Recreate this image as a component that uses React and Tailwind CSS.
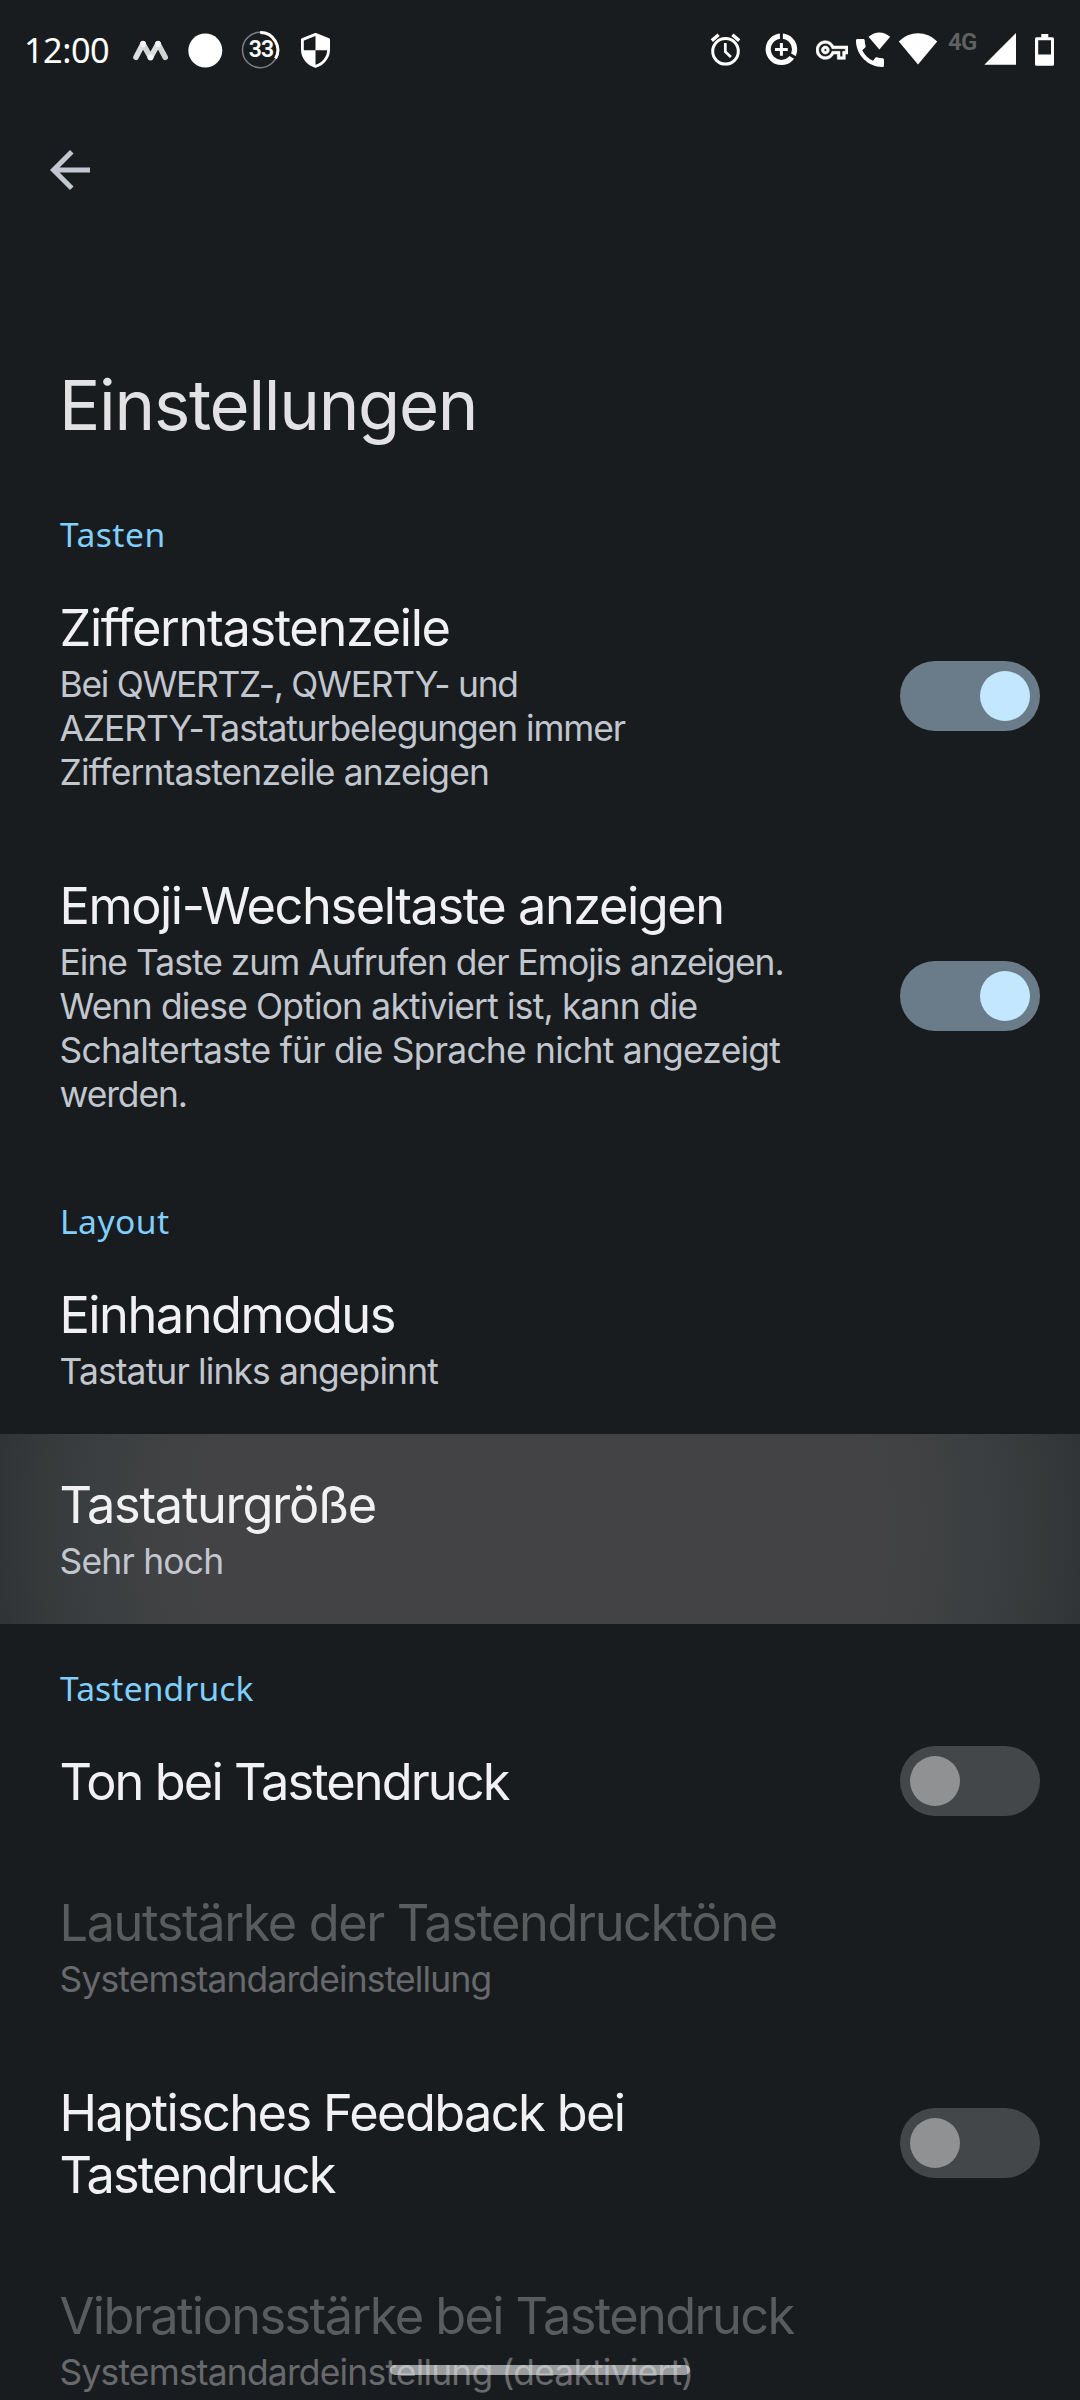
import React from "react";

const sections = [
  {
    label: "Tasten",
    labelTracking: "tracking-[0.49px]",
    items: [
      {
        title: [["Zifferntastenzeile", "tracking-[-1.36px]"]],
        summary: [
          ["Bei QWERTZ-, QWERTY- und", "tracking-[-1.28px]"],
          ["AZERTY-Tastaturbelegungen immer", "tracking-[-1.07px]"],
          ["Zifferntastenzeile anzeigen", "tracking-[-0.86px]"],
        ],
        toggle: "on",
      },
      {
        title: [["Emoji-Wechseltaste anzeigen", "tracking-[-1.44px]"]],
        summary: [
          ["Eine Taste zum Aufrufen der Emojis anzeigen.", "tracking-[-0.97px]"],
          ["Wenn diese Option aktiviert ist, kann die", "tracking-[-0.82px]"],
          ["Schaltertaste für die Sprache nicht angezeigt", "tracking-[-0.75px]"],
          ["werden.", "tracking-[-1.12px]"],
        ],
        toggle: "on",
      },
    ],
  },
  {
    label: "Layout",
    labelTracking: "tracking-[0.5px]",
    items: [
      {
        title: [["Einhandmodus", "tracking-[-1.5px]"]],
        summary: [["Tastatur links angepinnt", "tracking-[-0.86px]"]],
      },
      {
        title: [["Tastaturgröße", "tracking-[-1.33px]"]],
        summary: [["Sehr hoch", "tracking-[-0.78px]"]],
        pressed: true,
      },
    ],
  },
  {
    label: "Tastendruck",
    labelTracking: "tracking-[0.15px]",
    items: [
      { title: [["Ton bei Tastendruck", "tracking-[-1.91px]"]], toggle: "off" },
      {
        title: [["Lautstärke der Tastendrucktöne", "tracking-[-1.4px]"]],
        summary: [["Systemstandardeinstellung", "tracking-[-0.83px]"]],
        disabled: true,
      },
      {
        title: [
          ["Haptisches Feedback bei", "tracking-[-1.61px]"],
          ["Tastendruck", "tracking-[-1.87px]"],
        ],
        toggle: "off",
      },
      {
        title: [["Vibrationsstärke bei Tastendruck", "tracking-[-1.59px]"]],
        summary: [["Systemstandardeinstellung (deaktiviert)", "tracking-[-0.79px]"]],
        disabled: true,
      },
    ],
  },
];

function Toggle({ state }) {
  const on = state === "on";
  return (
    <div
      role="switch"
      aria-checked={on}
      className={
        "flex h-[70px] w-[140px] shrink-0 items-center rounded-full px-[10px] " +
        (on ? "justify-end bg-[#6a7c89]" : "mb-px justify-start bg-[#444749]")
      }
    >
      <div className={"size-[50px] rounded-full " + (on ? "bg-[#c2e7ff]" : "bg-[#8f9193]")} />
    </div>
  );
}

function Item({ title, summary, toggle, pressed, disabled }) {
  return (
    <div
      className={
        "flex items-center justify-between pr-10 pl-[59.500px] " +
        (pressed
          ? "bg-[radial-gradient(circle_at_540px_95px,#434345_330px,#3f4142_400px,#3a3e40_450px,#373a3b_500px,#303437_545px)]"
          : "")
      }
    >
      <div className={"pt-10 " + (summary ? "pb-10" : "pb-[39px]")}>
        <div className={"text-[50.5px] leading-[62px] " + (disabled ? "text-[#595c5d]" : "text-[#f1f1f3]")}>
          {title.map(([text, tracking]) => (
            <div key={text} className={"whitespace-nowrap " + tracking}>{text}</div>
          ))}
        </div>
        {summary && (
          <div className={"mt-1 text-[35.4px] leading-[44px] " + (disabled ? "text-[#67696d]" : "text-[#c1c6cf]")}>
            {summary.map(([text, tracking]) => (
              <div key={text} className={"whitespace-nowrap " + tracking}>{text}</div>
            ))}
          </div>
        )}
      </div>
      {toggle && <Toggle state={toggle} />}
    </div>
  );
}

function StatusBar() {
  return (
    <div className="flex h-[100px] items-center justify-between pr-[22px] pl-6 text-white">
      <div className="flex items-center">
        <div className="w-[106px] font-['Noto_Sans',sans-serif] text-[34.3px] leading-[40px] tracking-[-0.51px]">12:00</div>
        <svg className="h-10 w-[42px]" viewBox="130 30 42 40" fill="none" strokeLinecap="round" strokeWidth="5.6">
          <path d="M136 57.3L143 43.8M150.5 57.3L158 43.8" stroke="#dcdddd" />
          <path d="M143 43.8L150.5 57.3M158 43.8L165.2 57.3" stroke="#dcdddd" strokeOpacity="0.95" />
          <path d="M143 43.8v.4M158 43.8v.4M150.5 57v.4" stroke="#f4f4f4" />
        </svg>
        <svg className="ml-[13px] h-10 w-10" viewBox="185 30 40 40">
          <circle cx="205.3" cy="50.5" r="17" fill="#fff" />
        </svg>
        <div className="relative ml-4 flex h-10 w-10 items-center justify-center">
          <svg className="absolute inset-0 h-10 w-10" viewBox="0 0 40 40" fill="none">
            <circle cx="19.2" cy="20" r="17.7" stroke="#7d8081" strokeWidth="1.5" />
            <path d="M19.2 2.6A17.4 17.4 0 0 1 34.5 28.6" stroke="#fff" strokeWidth="3" />
          </svg>
          <span className="font-['Roboto',sans-serif] text-[23px] leading-10 font-semibold tracking-[-0.8px]">33</span>
        </div>
        <svg className="ml-[14px] h-10 w-10" viewBox="295 30 40 40">
          <path d="M315.5 34.4L328.6 39.6V49.5C328.6 57.5 323 64.3 315.5 66.3C308 64.3 302.4 57.5 302.4 49.5V39.6Z" fill="none" stroke="#fff" strokeWidth="2.8" strokeLinejoin="round" />
          <path d="M315.5 34.4L328.6 39.6V50.3H315.5ZM315.5 50.3V66.3C308 64.3 303 58 302.4 50.3Z" fill="#fff" />
        </svg>
      </div>
      <div className="flex items-center">
        <svg className="h-10 w-10" viewBox="705 30 40 40" fill="none">
          <circle cx="725.5" cy="51.3" r="12.8" stroke="#fff" strokeWidth="3" />
          <path d="M711.8 40.6L718.6 34.8M739.2 40.6L732.4 34.8" stroke="#fff" strokeWidth="3.4" />
          <path d="M725.3 43V51.6L730.9 57" stroke="#fff" strokeWidth="2.7" />
        </svg>
        <svg className="ml-4 h-10 w-10" viewBox="761 30 40 40" fill="none">
          <circle cx="781.4" cy="49.3" r="13.2" stroke="#fff" strokeWidth="5.2" />
          <path d="M781.4 32V41M788.5 53.6L797.5 59" stroke="#191c1e" strokeWidth="3" />
          <path d="M781.4 43V55.8M775 49.4H787.8" stroke="#fff" strokeWidth="3" />
        </svg>
        <svg className="ml-[14.5px] size-[32px]" viewBox="0 0 24 24" fill="#fff" stroke="#fff" strokeWidth="0.4">
          <path d="M22 19h-6v-4h-2.68c-1.14 2.42-3.6 4-6.32 4-3.86 0-7-3.14-7-7s3.14-7 7-7c2.72 0 5.17 1.58 6.32 4H24v6h-2v4zm-4-2h2v-4h2v-2H11.94l-.23-.67C11.01 8.34 9.11 7 7 7c-2.76 0-5 2.24-5 5s2.24 5 5 5c2.11 0 4.01-1.34 4.71-3.33l.23-.67H18v4zM7 15c-1.65 0-3-1.35-3-3s1.35-3 3-3 3 1.35 3 3-1.35 3-3 3zm0-4c-.55 0-1 .45-1 1s.45 1 1 1 1-.45 1-1-.45-1-1-1z" />
        </svg>
        <svg className="ml-[5.5px] h-10 w-10" viewBox="853 30 40 40" fill="#fff">
          <path transform="translate(851.3 34.3) scale(1.556)" d="M20.01 15.38c-1.23 0-2.42-.2-3.53-.56-.35-.12-.74-.03-1.01.24l-1.57 1.97c-2.83-1.35-5.48-3.9-6.89-6.83l1.95-1.66c.27-.28.35-.67.24-1.02-.37-1.11-.56-2.3-.56-3.53 0-.54-.45-.99-.99-.99H4.19C3.65 3 3 3.24 3 3.99 3 13.28 10.73 21 20.01 21c.71 0 .99-.63.99-1.18v-3.45c0-.54-.45-.99-.99-.99z" />
          <path d="M868.5 36.8Q879.3 28 890.2 36.8L879.4 49.6Z" />
        </svg>
        <svg className="ml-1 h-10 w-[42px]" viewBox="897 30 42 40" fill="#fff">
          <path d="M898.8 41.6C909.5 30.4 926.5 30.4 937.2 41.6L918 64.6Z" />
        </svg>
        <div className="ml-[9px] h-10 w-[32px] font-['Roboto',sans-serif] text-[24px] leading-[25px] font-semibold tracking-[-0.6px] text-[#5f6163]">4G</div>
        <svg className="ml-1 h-10 w-[34px]" viewBox="984 30 34 40" fill="#fff">
          <path d="M1016 33V64.7H984.3Z" />
        </svg>
        <svg className="ml-[15px] h-10 w-[25px]" viewBox="1033 30 25 40" fill="#fff">
          <path fillRule="evenodd" d="M1041.3 34h7v3.2h4.2q1.5 0 1.5 1.5v25.6q0 1.5-1.5 1.5h-16q-1.5 0-1.5-1.5v-25.600q0-1.5 1.5-1.5h4.8zM1038.2 40.3v14.2h12.8v-14.2z" />
        </svg>
      </div>
    </div>
  );
}

export default function App() {
  return (
    <div className="relative h-[2400px] w-[1080px] overflow-hidden bg-[#191c1e] font-['Inter',sans-serif]">
      <StatusBar />
      <div className="flex h-[140px] items-center px-10">
        <svg className="size-[60px]" viewBox="0 0 24 24" fill="#c1c6d0">
          <path d="M20 11H7.83l5.59-5.59L12 4l-8 8 8 8 1.41-1.41L7.83 13H20z" />
        </svg>
      </div>
      <h1 className="mt-[120px] mb-5 pl-[59px] text-[68.8px] leading-[90px] tracking-[-1.25px] text-[#e2e2e5]">Einstellungen</h1>
      {sections.map(({ label, labelTracking, items }) => (
        <section key={label}>
          <h2
            className={
              "flex h-[87px] items-end pb-[3px] pl-[60px] font-['Noto_Sans',sans-serif] text-[33.6px] leading-[40px] text-[#7fcfff] " +
              labelTracking
            }
          >
            {label}
          </h2>
          {items.map((item) => (
            <Item key={item.title[0][0]} {...item} />
          ))}
        </section>
      ))}
      <div className="absolute bottom-[25px] left-[390px] h-[10px] w-[300px] rounded-full bg-white/56" />
    </div>
  );
}
